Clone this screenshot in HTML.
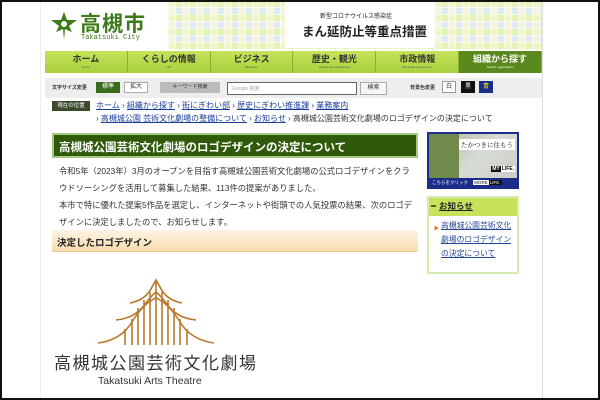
<!DOCTYPE html>
<html><head><meta charset="utf-8"><style>
*{margin:0;padding:0;box-sizing:border-box}
body{width:600px;height:400px;overflow:hidden;background:#fff;font-family:"Liberation Sans","Noto Sans CJK JP",sans-serif;position:relative;color:#333}
.frame{position:absolute;inset:0;border:2px solid #111;pointer-events:none;z-index:10}
.a{position:absolute}
.nav{left:45px;top:51px;width:497px;height:22px;display:flex;background:#b8d84a}
.nav div{flex:1;background:linear-gradient(#c6e35b,#a9cf3c);border-right:1px solid #8db030;text-align:center;font-size:9px;font-weight:bold;color:#333;line-height:11px;padding-top:3px;position:relative}
.nav div small{display:block;font-size:3px;line-height:5px;color:#555;font-weight:normal}
.nav div.on{background:#5a8a1e;color:#fff}
.nav div.on small{color:#fff}
.bc{font-size:8px;color:#1a3c9a}
.bc u{color:#1a3c9a}
p.t{font-size:8.3px;line-height:16.5px;color:#333}
.lnk{color:#24469a;text-decoration:underline}
</style></head><body>
<div class="frame"></div>
<div class="a" style="left:542px;top:0;width:1px;height:400px;background:#ddd"></div>
<div class="a" style="left:40px;top:0;width:1px;height:400px;background:#eee"></div>
<!-- logo -->
<svg class="a" style="left:51px;top:12px" width="26" height="28" viewBox="0 0 26 28"><path d="M13 0 L16 8 L26 8 L18 14 L21 20 L14 17 L13 28 L12 17 L5 20 L8 14 L0 8 L10 8Z" fill="#3c7a1a"/><circle cx="13" cy="12" r="3" fill="#fff"/></svg>
<div class="a" style="left:80px;top:8px;font-size:21px;font-weight:bold;color:#3c7a1a;letter-spacing:1px">高槻市</div>
<div class="a" style="left:81px;top:34px;font-size:7px;color:#3c7a1a;font-family:'Liberation Mono',monospace">Takatsuki City</div>
<!-- banner -->
<div class="a" style="left:168px;top:0;width:374px;height:50px;background:
linear-gradient(90deg,rgba(255,255,255,.6) 0 1px,transparent 1px) 0 0/7px 7px,
linear-gradient(rgba(255,255,255,.6) 0 1px,transparent 1px) 0 0/7px 7px,
conic-gradient(#e7f2b8 25%,#dcecf3 0 50%,#f6f6e0 0 75%,#eef5c8 0) 0 0/14px 14px"></div>
<div class="a" style="left:285px;top:2px;width:150px;height:46px;background:#fff"></div>
<div class="a" style="left:320px;top:11px;font-size:6px;color:#222">新型コロナウイルス感染症</div>
<div class="a" style="left:302px;top:21px;font-size:12.5px;font-weight:bold;color:#222">まん延防止等重点措置</div>
<!-- nav -->
<div class="a nav"><div>ホーム<small>Home</small></div><div>くらしの情報<small>Life</small></div><div>ビジネス<small>Business</small></div><div>歴史・観光<small>History and sightseeing</small></div><div>市政情報<small>Municipal government</small></div><div class="on">組織から探す<small>Search organization</small></div></div>
<!-- toolbar -->
<div class="a" style="left:45px;top:78px;width:497px;height:20px;background:#eee"></div>
<div class="a" style="left:52px;top:84px;font-size:5px;font-weight:bold">文字サイズ変更</div>
<div class="a" style="left:96px;top:82px;width:24px;height:11px;background:#3c6a1c;color:#fff;font-size:6px;text-align:center;line-height:11px">標準</div>
<div class="a" style="left:124px;top:82px;width:24px;height:11px;background:#fff;border:1px solid #aaa;font-size:6px;text-align:center;line-height:9px">拡大</div>
<div class="a" style="left:160px;top:82px;width:60px;height:11px;background:#bbb;font-size:5px;text-align:center;line-height:11px">キーワード検索</div>
<div class="a" style="left:227px;top:82px;width:130px;height:13px;background:#fff;border:1px solid #666;font-size:5px;color:#aaa;padding:2px 4px">Google 検索</div>
<div class="a" style="left:360px;top:82px;width:27px;height:13px;background:#f6f6f6;border:1px solid #aaa;font-size:6px;text-align:center;line-height:11px">検索</div>
<div class="a" style="left:410px;top:84px;font-size:5px;font-weight:bold">背景色変更</div>
<div class="a" style="left:442px;top:81px;width:14px;height:12px;background:#fff;border:1px solid #999;font-size:6px;text-align:center;line-height:10px">白</div>
<div class="a" style="left:461px;top:81px;width:14px;height:12px;background:#111;color:#fff;font-size:6px;text-align:center;line-height:12px">黒</div>
<div class="a" style="left:479px;top:81px;width:14px;height:12px;background:#1b2f8a;color:#ff0;font-size:6px;text-align:center;line-height:12px">青</div>
<!-- breadcrumb -->
<div class="a" style="left:52px;top:101px;width:38px;height:10px;background:#3c4a2c;color:#fff;font-size:5.5px;text-align:center;line-height:10px">現在の位置</div>
<div class="a bc" style="left:96px;top:100px;white-space:nowrap"><u>ホーム</u> › <u>組織から探す</u> › <u>街にぎわい部</u> › <u>歴史にぎわい推進課</u> › <u>業務案内</u></div>
<div class="a bc" style="left:96px;top:113px;white-space:nowrap">› <u>高槻城公園 芸術文化劇場の整備について</u> › <u>お知らせ</u> › <span style="color:#333">高槻城公園芸術文化劇場のロゴデザインの決定について</span></div>
<!-- title -->
<div class="a" style="left:52px;top:133px;width:366px;height:25px;background:#2f5a0a;border:2px solid #a5c882;color:#fff;font-size:11.5px;font-weight:bold;padding:4px 5px;white-space:nowrap">高槻城公園芸術文化劇場のロゴデザインの決定について</div>
<p class="a t" style="left:59px;top:163px;width:354px">令和5年（2023年）3月のオープンを目指す高槻城公園芸術文化劇場の公式ロゴデザインをクラウドソーシングを活用して募集した結果、113件の提案がありました。</p>
<p class="a t" style="left:59px;top:197px;width:354px">本市で特に優れた提案5作品を選定し、インターネットや街頭での人気投票の結果、次のロゴデザインに決定しましたので、お知らせします。</p>
<div class="a" style="left:52px;top:230px;width:366px;height:22px;background:linear-gradient(#fdf4e4,#f8dcae);border-bottom:1px solid #e8c890;border-radius:2px;font-size:9.5px;font-weight:bold;color:#222;padding:5px 5px">決定したロゴデザイン</div>
<!-- logo art -->
<svg class="a" style="left:96px;top:276px" width="120" height="70" viewBox="0 0 120 70" fill="none" stroke="#b7792a" stroke-width="1.6">
<path d="M2 67 Q25 64 36 46 Q46 30 56 24 Q60 22 60 21 Q60 22 64 24 Q74 30 84 46 Q95 64 118 67"/>
<path d="M20 44 Q40 42 50 27 Q55 20 60 16 Q65 20 70 27 Q80 42 100 44"/>
<path d="M34 27 Q50 24 56 11 L60 4 L64 11 Q70 24 86 27"/>
<path d="M60 4V69M54 16V69M66 16V69M48 24V69M72 24V69M42 32V69M78 32V69M36 43V69M84 43V69M29 53V69M91 53V69"/>
</svg>
<div class="a" style="left:54px;top:349px;font-size:17px;color:#333;letter-spacing:1.5px;white-space:nowrap">高槻城公園芸術文化劇場</div>
<div class="a" style="left:98px;top:375px;font-size:10.5px;color:#333">Takatsuki Arts Theatre</div>
<!-- sidebar -->
<div class="a" style="left:427px;top:132px;width:92px;height:57px;border:2px solid #1c2c8a;background:linear-gradient(135deg,#9fb28a,#d8dcd6 50%,#c9cbc4)">
<div style="position:absolute;left:0;top:0;width:30px;height:45px;background:#6f8a4a"></div>
<div style="position:absolute;right:2px;top:5px;background:#fff;font-size:6.5px;font-family:'Noto Serif CJK SC',serif;padding:1px 2px;color:#111">たかつきに住もう</div>
<div style="position:absolute;right:2px;top:32px;font-size:5px;font-weight:bold"><span style="background:#111;color:#fff;padding:0 1px">MY</span><span style="background:#fff;color:#111;padding:0 1px">LIFE.</span></div>
<div style="position:absolute;left:0;bottom:0;width:100%;height:9px;background:#1c2c8a;color:#fff;font-size:4.5px;line-height:9px;padding-left:3px">こちらをクリック <span style="background:#fff;color:#111;margin-left:4px;padding:0 1px">MORE</span><span style="background:#111;padding:0 1px">LIFE.</span></div>
</div>
<div class="a" style="left:427px;top:196px;width:92px;height:78px;border:2px solid #d6ebb4;background:#fff"></div>
<div class="a" style="left:429px;top:198px;width:88px;height:18px;background:#c6e35b"></div>
<div class="a" style="left:431px;top:205px;width:5px;height:2px;background:#3c6a1c"></div>
<div class="a" style="left:439px;top:200px;font-size:8.5px;font-weight:bold;text-decoration:underline;color:#222">お知らせ</div>
<div class="a" style="left:434px;top:225px;font-size:5px;color:#e0701a">▶</div>
<div class="a lnk" style="left:441px;top:219px;width:76px;font-size:7.8px;line-height:14px">高槻城公園芸術文化劇場のロゴデザインの決定について</div>
</body></html>
